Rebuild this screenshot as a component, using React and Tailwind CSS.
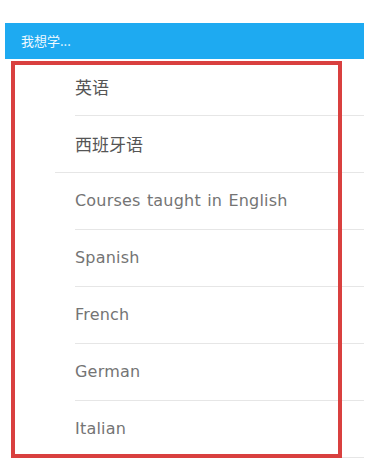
export default function App() {
  const rows = [
    { t: "英语", cjk: true, line: "ml-[70px]" },
    { t: "西班牙语", cjk: true, line: "ml-[50px]" },
    { t: "Courses taught in English", line: "ml-[70px]" },
    { t: "Spanish", line: "ml-[70px]" },
    { t: "French", line: "ml-[70px]" },
    { t: "German", line: "ml-[70px]" },
    { t: "Italian", line: "ml-[70px]" },
  ];
  return (
    <div className="relative w-[369px] h-[470px] bg-white overflow-hidden" style={{ fontFamily: '"Open Sans", "Noto Sans CJK SC", sans-serif' }}>
      <div className="pt-[23px] pl-[5px] pr-[5px]">
        <div className="h-[36px] bg-[#1eaaf1] flex items-center pl-[16px] text-[#eef8ff] text-[13px]" style={{ fontFamily: '"Noto Sans CJK SC", sans-serif' }}>我想学...</div>
        <div>
          {rows.map((r, i) => (
            <div key={i} className="flex flex-col">
              <div className={`h-[56px] flex items-center pl-[70px] ${r.cjk ? "text-[17px] text-[#555]" : "text-[16px] text-[#747474] [word-spacing:1px] tracking-[0.2px]"}`} style={{ fontFamily: r.cjk ? '"Noto Sans CJK SC", sans-serif' : '"DejaVu Sans", sans-serif' }}>
                {r.t}
              </div>
              <div className={`h-px bg-[#e6e6e6] ${r.line}`} />
            </div>
          ))}
        </div>
      </div>
      <div className="absolute left-[11px] top-[61px] w-[331px] h-[397px] border-[4px] border-[#d9403f] pointer-events-none" />
    </div>
  );
}
